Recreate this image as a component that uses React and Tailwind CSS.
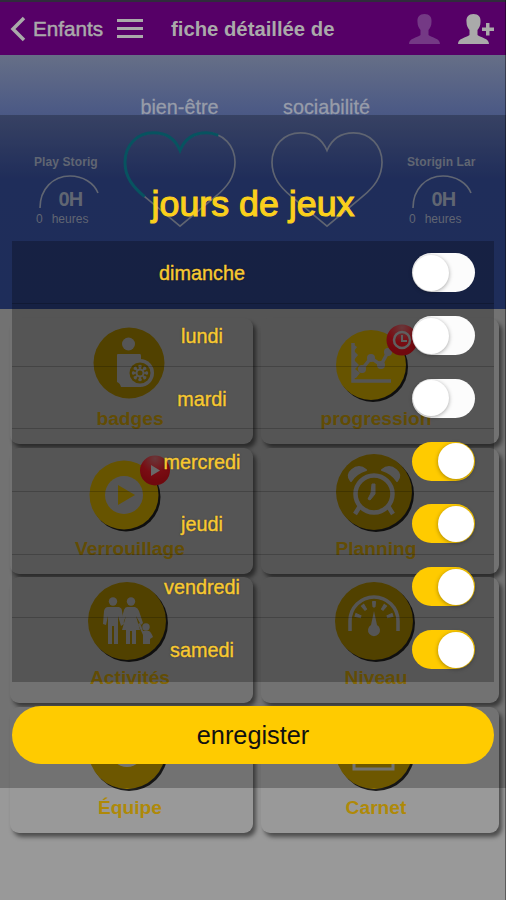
import React from "react";

const days = [
  ["dimanche", false],
  ["lundi", false],
  ["mardi", false],
  ["mercredi", true],
  ["jeudi", true],
  ["vendredi", true],
  ["samedi", true],
];

const HEART =
  "M57 20C52 8 42 2 30 2C13 2 1 15 1 32C1 47 9 57 21 67L57 97L93 67C105 57 113 47 113 32C113 15 101 2 84 2C72 2 62 8 57 20Z";
const HEART_PROGRESS = "M96 4.5C92 3 88 2 84 2C72 2 62 8 57 20C52 8 42 2 30 2C13 2 1 15 1 32C1 47 9 57 21 67";

function Heart({ label, progress }) {
  return (
    <div className="flex w-[147px] flex-col items-center">
      <span className="text-[19.8px] leading-6 text-[#979ca9] [-webkit-text-stroke:0.3px_#979ca9]">{label}</span>
      <svg className="mt-[11px] overflow-visible" width="112" height="100" viewBox="0 0 114 100" fill="none">
        <path d={HEART} stroke="#7f8697" strokeWidth="1.7" />
        {progress && <path d={HEART_PROGRESS} stroke="#0a6f80" strokeWidth="3" />}
      </svg>
    </div>
  );
}

function Gauge({ label }) {
  return (
    <div className="flex w-[68px] flex-col text-[#818899]">
      <div className="whitespace-nowrap pl-px text-[12px] font-bold leading-4 tracking-[0.1px]">{label}</div>
      <div className="flex h-[40px] items-end justify-center">
        <svg className="absolute" width="68" height="36" viewBox="0 0 68 36" fill="none">
          <path d="M7 34C7 15 20 2 37 2C50 2 61 9 65 19" stroke="currentColor" strokeWidth="1.6" />
        </svg>
        <span className="pl-[7px] text-[20px] font-bold leading-[22px] tracking-[-0.8px]">0H</span>
      </div>
      <div className="flex gap-[9px] pl-[3px] pt-[2px] text-[12px] leading-[14px]">
        <span>0</span>
        <span>heures</span>
      </div>
    </div>
  );
}

function Disc({ cx, cy, r, bright, flat }) {
  return (
    <>
      {!flat && <circle cx={cx + 2} cy={cy + 2} r={r} fill="#1d1d1d" />}
      <circle cx={cx} cy={cy} r={r} fill={bright ? "#b99600" : "#927400"} />
    </>
  );
}

function BadgesIcon() {
  return (
    <>
      <Disc cx={49} cy={45} r={35.5} flat />
      <circle cx="48.500" cy="26" r="6.5" fill="#999" />
      <path d="M37 37Q37 36 38 36H60Q61 36 61 38V69H41Q40 65 37 64Z" fill="#999" />
      <circle cx="60" cy="55" r="14" fill="#999" />
      <circle cx="60" cy="55" r="10.5" fill="#927400" />
      {[0, 45, 90, 135, 180, 225, 270, 315].map((a) => (
        <path key={a} d="M60 52L58 48Q60 45.500 62 48Z" fill="#999" transform={`rotate(${a} 60 55)`} />
      ))}
      <circle cx="60" cy="55" r="3.500" fill="none" stroke="#999" strokeWidth="2" />
    </>
  );
}

function ProgressIcon() {
  return (
    <>
      <Disc cx={45} cy={47} r={35} bright />
      <path d="M27 25V63H65" fill="none" stroke="#999" strokeWidth="3.5" />
      <path d="M27 26L31 29L28 33L32 37L28 42L33 47L29 51L34 55L30 60H27Z" fill="#999" />
      <path d="M36 51L45 40L55 47L62 34" fill="none" stroke="#999" strokeWidth="3.5" />
      {[[36, 51], [45, 40], [55, 47], [62, 34]].map(([x, y]) => (
        <circle key={x} cx={x} cy={y} r="4" fill="#999" />
      ))}
      <circle cx="76" cy="22" r="15.500" fill="url(#red)" />
      <circle cx="76" cy="22" r="8" fill="none" stroke="#aaa" strokeWidth="2.5" />
      <path d="M76 17V23H81" fill="none" stroke="#aaa" strokeWidth="2" />
    </>
  );
}

function PlayIcon() {
  return (
    <>
      <Disc cx={44} cy={47} r={34.5} bright />
      <circle cx="44" cy="47" r="19" fill="#999" />
      <path d="M38 37L55 47L38 57Z" fill="#b99600" />
      <circle cx="75" cy="22.500" r="15" fill="url(#red)" />
      <path d="M71 17L80 22.500L71 28Z" fill="#bbb" />
    </>
  );
}

function AlarmIcon() {
  return (
    <>
      <Disc cx={48} cy={44} r={38} />
      <path d="M25 33Q20 27 26 22Q33 16 40 22Q30 25 25 33ZM71 33Q76 27 70 22Q63 16 56 22Q66 25 71 33Z" fill="#999" stroke="#999" strokeWidth="2" strokeLinejoin="round" />
      <circle cx="48" cy="46" r="18.500" fill="none" stroke="#999" strokeWidth="4.500" />
      <path d="M34 58L29 66M62 58L67 66" stroke="#999" strokeWidth="4.500" />
      <path d="M46 36H49V46L44 52L42 51L45 45Z" fill="#999" stroke="#999" />
    </>
  );
}

function FamilyIcon() {
  return (
    <g>
      <Disc cx={47} cy={44} r={39} />
      <g fill="#999">
        <circle cx="33" cy="24.500" r="4.200" />
        <path d="M28 30H39Q42 31 42 34L44 47L41 49L38 39V67H34V49H32V67H28V39L26 48L23 47L24 34Q25 30 28 30Z" />
        <circle cx="51" cy="24.500" r="4.200" />
        <path d="M47 30H55Q58 31 59 34L63 46L61 48L56 39L60 53H56V67H52V54H50V67H46V53H42L46 39L43 46L41 44L44 33Q45 30 47 30Z" />
        <circle cx="66" cy="50" r="3.700" />
        <path d="M63 54H69Q71 55 73 60L70 62V67H63V58L58 47L60 46Z" />
      </g>
    </g>
  );
}

function LevelIcon() {
  return (
    <>
      <Disc cx={48} cy={44} r={39} />
      <path d="M24 54V44A24 24 0 0 1 72 44V54" fill="none" stroke="#999" strokeWidth="3.500" />
      {[-72, -36, 0, 36, 72].map((a) => (
        <path key={a} d="M46.500 24.500H49.500L49 30H47Z" fill="#999" stroke="#999" transform={`rotate(${a} 48 44)`} />
      ))}
      <path d="M48 34L51 48A6 6 0 1 1 45 48Z" fill="#999" />
    </>
  );
}

function TeamIcon() {
  return (
    <>
      <Disc cx={47} cy={43.5} r={38.5} />
      <circle cx="47" cy="43" r="17" fill="#999" />
    </>
  );
}

function NotebookIcon() {
  return (
    <>
      <Disc cx={48} cy={43.5} r={38.5} />
      <path d="M28 25H67V62H28Z" fill="none" stroke="#999" strokeWidth="3" />
    </>
  );
}

const tiles = [
  ["badges", BadgesIcon],
  ["progression", ProgressIcon],
  ["Verrouillage", PlayIcon],
  ["Planning", AlarmIcon],
  ["Activités", FamilyIcon],
  ["Niveau", LevelIcon],
  ["Équipe", TeamIcon],
  ["Carnet", NotebookIcon],
];

function Tile({ label, Icon, right }) {
  return (
    <div
      className={`flex h-[126px] flex-col items-center rounded-[9px] bg-[#999] shadow-[3px_4px_4px_rgba(0,0,0,0.5)] ${right ? "pr-2" : "pr-[3px]"}`}
    >
      <svg className="shrink-0 overflow-visible" width="100" height="88" viewBox="0 0 100 88">
        <Icon />
      </svg>
      <span className="text-[19.2px] font-bold leading-[26px] text-[#af8908]">{label}</span>
    </div>
  );
}

function Person({ className, plus }) {
  return (
    <svg className={className} width="36" height="32" viewBox="0 0 36 32" fill="currentColor">
      <path d="M15.500 1C10.500 1 8 4 8.500 9C8.500 13 10 15 11.500 17V22C8 25 0 25 0 31H31C31 25 23 25 19.500 22V17C21 15 22.500 13 22.500 9C23 4 20.500 1 15.500 1Z" />
      {plus && <path d="M28 10H31.500V14.500H36V18H31.500V22.500H28V18H24V14.500H28Z" />}
    </svg>
  );
}

function Toggle({ on }) {
  return (
    <div
      className={`flex h-[39px] w-[63px] items-center rounded-full p-px ${on ? "justify-end bg-[#ffcb00]" : "justify-start bg-[#fcfcfc]"}`}
    >
      <div className="size-[36px] rounded-full bg-white shadow-[0_1px_4px_rgba(0,0,0,0.35)]" />
    </div>
  );
}

export default function App() {
  return (
    <div className="relative h-[900px] w-[506px] overflow-hidden bg-[#999] font-['Liberation_Sans',Arial,sans-serif]">
      <svg className="absolute" width="0" height="0">
        <defs>
          <radialGradient id="red" cx="0.5" cy="0.1" r="0.8">
            <stop offset="0" stopColor="#b96468" />
            <stop offset="0.6" stopColor="#d91722" />
            <stop offset="1" stopColor="#c9101a" />
          </radialGradient>
        </defs>
      </svg>

      <header className="flex h-[55px] items-center border-t-2 border-[#302b3c] bg-[#560067] pl-[10px] text-[#aaa]">
        <svg width="16" height="26" viewBox="0 0 16 26" fill="none" stroke="currentColor" strokeWidth="3.500">
          <path d="M14 2L3 13L14 24" />
        </svg>
        <span className="ml-[7px] w-[70px] whitespace-nowrap text-[20.7px] leading-6 [-webkit-text-stroke:0.5px_#aaa]">
          Enfants
        </span>
        <div className="ml-[14px] flex w-[26px] flex-col gap-[5px]">
          <div className="h-[3px] bg-[#aaa]" />
          <div className="h-[3px] bg-[#aaa]" />
          <div className="h-[3px] bg-[#aaa]" />
        </div>
        <h1 className="ml-[28px] w-[166px] whitespace-nowrap text-[20.3px] font-bold leading-6">fiche détaillée de</h1>
        <Person className="ml-[72px] text-[#743985]" />
        <Person className="ml-[13px] text-[#aaa]" plus />
      </header>

      <section className="flex h-[254px] bg-[linear-gradient(#666f87_0px,#4b5985_58px,#2a3c78_125px,#293c79_254px)]">
        <div className="ml-[33px] mt-[99px] h-[80px]">
          <Gauge label="Play Storig" />
        </div>
        <div className="ml-[5px] mt-[40px] flex">
          <Heart label="bien-être" progress />
          <Heart label="sociabilité" />
        </div>
        <div className="ml-[6px] mt-[99px] h-[80px]">
          <Gauge label="Storigin Lar" />
        </div>
      </section>

      <main className="grid grid-cols-[243px_238px] gap-x-[8px] gap-y-[3.7px] pl-[10px] pt-[9px]">
        {tiles.map(([label, Icon], i) => (
          <Tile key={label} label={label} Icon={Icon} right={i % 2 === 1} />
        ))}
      </main>

      <div className="absolute inset-y-0 right-0 w-px bg-black/40" />

      <div className="absolute inset-x-0 top-[115px] flex h-[673px] flex-col bg-black/25 px-[12px]">
        <h2 className="mt-[68px] h-[58px] text-center text-[35.8px] leading-[42px] text-[#fbd01c] [-webkit-text-stroke:1.1px_#fbd01c]">
          jours de jeux
        </h2>
        <ul className="flex h-[441px] flex-col bg-black/25">
          {days.map(([day, on]) => (
            <li
              key={day}
              className="flex h-[62.750px] items-center border-b border-black/20 pr-[19px] pt-[2px] last:border-b-0"
            >
              <span className="ml-[90px] w-[200px] pt-px text-center text-[19.8px] leading-6 text-[#f8c931] [-webkit-text-stroke:0.4px_#f8c931] [text-shadow:0_0_2px_rgba(0,0,0,0.5)]">
                {day}
              </span>
              <div className="ml-auto">
                <Toggle on={on} />
              </div>
            </li>
          ))}
        </ul>
        <button className="mt-[24px] h-[58px] rounded-full bg-[#ffcb00] pt-px text-[25.3px] text-[#111]">enregister</button>
      </div>
    </div>
  );
}
